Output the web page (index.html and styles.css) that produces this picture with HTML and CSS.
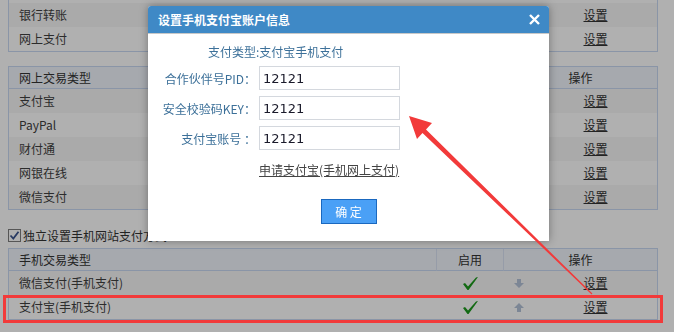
FILE: index.html
```html
<!DOCTYPE html>
<html>

<head>
    <meta charset="utf-8">
    <title>支付方式设置</title>
    <link rel="stylesheet" href="styles.css">
</head>

<body>
    <div class="page">
        <table class="pay-table">
            <colgroup>
                <col class="col-name"><col class="col-state"><col class="col-sort"><col class="col-op">
            </colgroup>
            <tbody>
                <tr><td></td><td></td><td></td><td></td></tr>
                <tr class="alt"><td>银行转账</td><td></td><td></td><td class="op"><a href="#">设置</a></td></tr>
                <tr><td>网上支付</td><td></td><td></td><td class="op"><a href="#">设置</a></td></tr>
            </tbody>
        </table>

        <table class="pay-table online">
            <colgroup>
                <col class="col-name"><col class="col-state"><col class="col-sort"><col class="col-op">
            </colgroup>
            <thead>
                <tr><th>网上交易类型</th><th class="center">启用</th><th class="center" colspan="2">操作</th></tr>
            </thead>
            <tbody>
                <tr class="alt"><td>支付宝</td><td></td><td></td><td class="op"><a href="#">设置</a></td></tr>
                <tr><td>PayPal</td><td></td><td></td><td class="op"><a href="#">设置</a></td></tr>
                <tr class="alt"><td>财付通</td><td></td><td></td><td class="op"><a href="#">设置</a></td></tr>
                <tr><td>网银在线</td><td></td><td></td><td class="op"><a href="#">设置</a></td></tr>
                <tr class="alt"><td>微信支付</td><td></td><td></td><td class="op"><a href="#">设置</a></td></tr>
            </tbody>
        </table>

        <div class="option">
            <span class="checkbox">
                <svg width="11" height="11" viewBox="0 0 11 11"><path d="M1.5 5.5 L4.3 8.5 L9.5 1.8" fill="none" stroke="#3b5590" stroke-width="1.8"/></svg>
            </span>
            <span>独立设置手机网站支付方式</span>
        </div>

        <table class="pay-table mobile">
            <colgroup>
                <col class="col-name"><col class="col-state"><col class="col-sort"><col class="col-op">
            </colgroup>
            <thead>
                <tr><th>手机交易类型</th><th class="center">启用</th><th class="center" colspan="2">操作</th></tr>
            </thead>
            <tbody>
                <tr class="alt">
                    <td>微信支付(手机支付)</td>
                    <td class="center">
                        <svg class="tick" width="15" height="13" viewBox="0 0 15 13"><polygon points="0,7 2,6 5,9.5 13,0.5 15,0 5.5,13 4.5,13"/></svg>
                    </td>
                    <td class="center">
                        <svg class="move" width="10" height="9" viewBox="0 0 10 9"><polygon points="3,0 7,0 7,4 10,4 5,9 0,4 3,4"/></svg>
                    </td>
                    <td class="op"><a href="#">设置</a></td>
                </tr>
                <tr>
                    <td>支付宝(手机支付)</td>
                    <td class="center">
                        <svg class="tick" width="15" height="13" viewBox="0 0 15 13"><polygon points="0,7 2,6 5,9.5 13,0.5 15,0 5.5,13 4.5,13"/></svg>
                    </td>
                    <td class="center">
                        <svg class="move" width="10" height="9" viewBox="0 0 10 9"><polygon points="5,0 10,5 7,5 7,9 3,9 3,5 0,5"/></svg>
                    </td>
                    <td class="op"><a href="#">设置</a></td>
                </tr>
            </tbody>
        </table>
    </div>

    <div class="mask"></div>

    <div class="dialog">
        <div class="dialog-head">
            <span class="dialog-title">设置手机支付宝账户信息</span>
            <a class="dialog-close" href="#">
                <svg width="11" height="11" viewBox="0 0 11 11"><path d="M1 1 L10 10 M10 1 L1 10" stroke="#fff" stroke-width="2.4"/></svg>
            </a>
        </div>
        <div class="dialog-body">
            <p class="pay-type">支付类型:支付宝手机支付</p>
            <div class="form-grid">
                <label for="pid">合作伙伴号PID：</label>
                <input id="pid" type="text" value="12121">
                <label for="key">安全校验码KEY：</label>
                <input id="key" type="text" value="12121">
                <label for="account">支付宝账号 ：</label>
                <input id="account" type="text" value="12121">
                <span></span>
                <a class="apply-link" href="#">申请支付宝(手机网上支付)</a>
            </div>
            <div class="dialog-foot">
                <button class="btn-ok">确 定</button>
            </div>
        </div>
    </div>

    <div class="mark-box"></div>
    <svg class="mark-arrow" width="674" height="332" viewBox="0 0 674 332">
        <polygon points="409,116 432,123 426,129.5 592.4,293.6 591.6,294.4 422.5,133 417,139" fill="#f23a3a"/>
    </svg>
</body>

</html>
```

FILE: styles.css
```css
body {
    margin: 0;
    font-family: "Noto Sans CJK SC", sans-serif;
    font-size: 12px;
    color: #404040;
    background: #fff;
    overflow: hidden;
}

.page {
    margin-top: -22px;
    padding: 0 8px;
}

.pay-table {
    width: 650px;
    table-layout: fixed;
    border: 1px solid #c9d8f2;
    border-spacing: 0;
}

.col-name { width: 428px; }
.col-state { width: 67px; }
.col-sort { width: 30px; }
.col-op { width: 123px; }

.pay-table th {
    height: 21px;
    padding: 0 10px;
    text-align: left;
    font-weight: normal;
    color: #333;
    background: #f1f5fc;
    border-bottom: 1px solid #c9d8f2;
    border-right: 1px solid #d9e3f3;
}

.pay-table th:last-child {
    border-right: none;
}

.pay-table td {
    height: 24px;
    padding: 0 10px;
    line-height: 16px;
}

.pay-table tr.alt td {
    background: #f7f7f7;
}

.pay-table .center {
    text-align: center;
    padding: 0;
}

.pay-table .op {
    text-align: center;
    padding: 0;
}

.pay-table .op a {
    color: #333;
}

.online {
    margin-top: 14px;
}

.tick {
    display: block;
    margin: 1px auto 0;
    fill: #1c9a1c;
}

.move {
    display: block;
    margin: 0 auto;
    fill: #b4c3d8;
}

.option {
    display: flex;
    align-items: center;
    gap: 2px;
    height: 21px;
    margin: 15px 0 2px;
    font-size: 12px;
    color: #333;
}

.checkbox {
    display: flex;
    align-items: center;
    justify-content: center;
    width: 11px;
    height: 11px;
    border: 1px solid #7d7d7d;
    background: #fff;
}

.mask {
    position: fixed;
    top: 0;
    left: 0;
    right: 0;
    bottom: 0;
    background: rgba(0, 0, 0, 0.31);
}

.dialog {
    position: absolute;
    left: 148px;
    top: 6px;
    width: 401px;
    height: 235px;
    background: #fff;
    border-radius: 3px 3px 0 0;
    box-shadow: 0 0 8px rgba(0, 0, 0, 0.35);
}

.dialog-head {
    display: flex;
    align-items: center;
    justify-content: space-between;
    height: 27px;
    padding: 0 9px 0 10px;
    background: #3f89c6;
    border-bottom: 1px solid #c8c8c8;
    border-radius: 3px 3px 0 0;
}

.dialog-title {
    color: #fff;
    font-size: 12px;
    font-weight: bold;
}

.dialog-close {
    display: flex;
}

.dialog-body {
    padding-top: 9px;
}

.pay-type {
    margin: 0 0 5px 60px;
    line-height: 18px;
    color: #3c7099;
}

.form-grid {
    display: grid;
    grid-template-columns: 108px 141px;
    grid-auto-rows: 24px;
    column-gap: 3px;
    row-gap: 6px;
}

.form-grid label {
    justify-self: end;
    align-self: center;
    color: #3c7099;
    white-space: nowrap;
}

.form-grid input {
    box-sizing: border-box;
    width: 141px;
    height: 24px;
    margin: 0;
    padding: 0 3px;
    border: 1px solid #d4d8de;
    font-family: "DejaVu Sans", sans-serif;
    font-size: 13px;
    color: #1a1a2a;
}

.apply-link {
    padding-top: 5px;
    font-size: 12px;
    line-height: 18px;
    color: #444;
    white-space: nowrap;
}

.dialog-foot {
    display: flex;
    justify-content: center;
    margin-top: 19px;
}

.btn-ok {
    width: 56px;
    height: 25px;
    padding: 0;
    border: 1px solid #1a68bf;
    background: #4aa0f6;
    color: #fff;
    font-family: "Noto Sans CJK SC", sans-serif;
    font-size: 12px;
}

.mark-box {
    position: absolute;
    left: 3px;
    top: 295px;
    width: 654px;
    height: 22px;
    border: 3px solid #f23a3a;
}

.mark-arrow {
    position: absolute;
    left: 0;
    top: 0;
    pointer-events: none;
}
```
